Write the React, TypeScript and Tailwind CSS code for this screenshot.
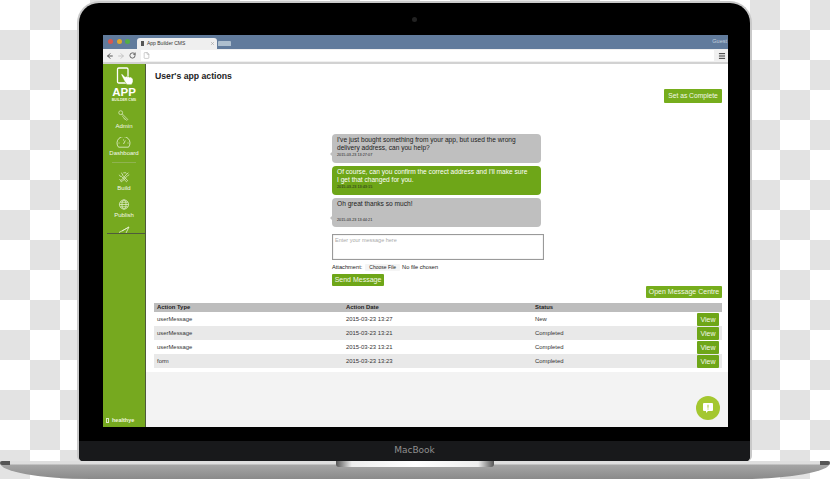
import { Menu, RotateCw, ArrowLeft, ArrowRight, File, X } from "lucide-react";

const font = "font-['Liberation_Sans',Arial,sans-serif]";

const rows = [
  { type: "userMessage", date: "2015-03-23 13:27", status: "New" },
  { type: "userMessage", date: "2015-03-23 13:21", status: "Completed" },
  { type: "userMessage", date: "2015-03-23 13:21", status: "Completed" },
  { type: "form", date: "2015-03-23 13:23", status: "Completed" },
];

function LogoIcon() {
  return (
    <svg width="20" height="20" viewBox="0 0 20 20" fill="none">
      <rect x="1.500" y="1" width="10.500" height="15" rx="1.200" stroke="#fff" strokeWidth="1.300" />
      <path d="M5 7.500l1-.8 3.200 3.200 1.300-.6 1 .5 1-.2 1 .6 1.300-.1 2.200 2v3l-1.500 2.600h-4.500l-2.500-3.500z" fill="#fff" stroke="#76a91f" strokeWidth="0.500" />
    </svg>
  );
}

function KeyIcon() {
  return (
    <svg width="15" height="15" viewBox="0 0 13 13" fill="none" stroke="#e8f2d5" strokeWidth="0.800">
      <circle cx="3.200" cy="3.200" r="2.300" />
      <path d="M5 4.600l6.500 6.500-1.200 1.200L9 11l-.8.200-.2-1-1-.2-.2-1.200-2.300-2.300" />
    </svg>
  );
}

function GaugeIcon() {
  return (
    <svg width="15" height="11" viewBox="0 0 15 11" fill="none" stroke="#e8f2d5" strokeWidth="0.800">
      <path d="M2.500 10.200h10a6.500 6.500 0 1 0-10 0z" />
      <path d="M7.500 7l1.800-3.500M2.500 6h1M11.500 6h1M7.500 2.500v1" />
    </svg>
  );
}

function BuildIcon() {
  return (
    <svg width="15" height="14" viewBox="0 0 15 14" fill="none" stroke="#e8f2d5" strokeWidth="0.900">
      <path d="M3 1l2 1.500v1.500l6.500 7-1.500 1.500L3.500 5.500H2L.8 3.500" />
      <path d="M12.500 1l-2 1.500L4 10l-1.500 1 1 1.500 1.500-1L11.500 4.500l2-1" />
      <path d="M6 1h3.500l1 1M1 9l2 2" />
    </svg>
  );
}

function GlobeIcon() {
  return (
    <svg width="12" height="12" viewBox="0 0 12 12" fill="none" stroke="#e8f2d5" strokeWidth="0.800">
      <circle cx="6" cy="6" r="5" />
      <ellipse cx="6" cy="6" rx="2.200" ry="5" />
      <path d="M1 6h10M1.800 3.500h8.400M1.800 8.500h8.400" />
    </svg>
  );
}

function NavItem({ icon, label }: { icon: React.ReactNode; label: string }) {
  return (
    <div className="flex h-[20px] flex-col items-center justify-end gap-[1px]">
      {icon}
      <span className="text-[6px] leading-[8px] text-[#f4f8e8]">{label}</span>
    </div>
  );
}

function Sidebar() {
  return (
    <aside className="relative flex w-[43px] shrink-0 flex-col items-center border-r border-[#4d5a3a] bg-[#76a91f]">
      <div className="mt-[3px] ml-[3px] flex h-[20px] items-center">
        <LogoIcon />
      </div>
      <span className="text-[11.500px] leading-[10px] font-bold text-white">APP</span>
      <span className="mt-[1px] text-[3.500px] leading-[4px] font-bold text-[#eef5df]">BUILDER CMS</span>
      <div className="mt-[8px] flex flex-col gap-[7px]">
        <NavItem icon={<KeyIcon />} label="Admin" />
        <NavItem icon={<GaugeIcon />} label="Dashboard" />
      </div>
      <div className="mt-[5px] h-px w-[24px] bg-[#8fb350]" />
      <div className="mt-[9px] flex flex-col gap-[7px]">
        <NavItem icon={<BuildIcon />} label="Build" />
        <NavItem icon={<GlobeIcon />} label="Publish" />
      </div>
      <svg className="mt-[7px]" width="12" height="7" viewBox="0 0 12 7" fill="none" stroke="#e8f2d5" strokeWidth="0.800">
        <path d="M1 6.500L11 1 8 7M11 1L4 5" />
      </svg>
      <div className="ml-[4px] h-px w-[39px] self-start bg-[#4f5b3c]" />
      <div className="mt-auto mb-[3px] flex w-full items-center gap-[3px] pl-[3px]">
        <span className="h-[5px] w-[3px] border border-[#dfeac6]" />
        <span className="text-[5.500px] leading-[8px] font-bold text-[#eef5df]">healthye</span>
      </div>
    </aside>
  );
}

function Bubble({ green, lines, time, gap }: { green?: boolean; lines: string[]; time: string; gap?: boolean }) {
  return (
    <div className={`relative flex h-[29px] w-[209px] flex-col rounded-[4px] px-[5px] pt-[2px] text-[6.600px] leading-[8px] ${green ? "bg-[#6ea618] text-white" : "bg-[#bfbfbf] text-[#222]"}`}>
      {!green && (
        <span className="absolute top-[18px] -left-[2px] h-0 w-0 border-y-[2px] border-r-[2px] border-y-transparent border-r-[#bfbfbf]" />
      )}
      {lines.map((l) => (
        <span key={l}>{l}</span>
      ))}
      <span className={`${gap ? "mt-auto mb-[4px]" : "mt-[1px]"} text-[3.800px] leading-[5px] text-[#222]`}>{time}</span>
    </div>
  );
}

function Thread() {
  return (
    <div className="mt-[31px] ml-[178px] flex w-[212px] flex-col">
      <div className="flex flex-col gap-[3px]">
        <Bubble
          lines={["I've just bought something from your app, but used the wrong", "delivery address, can you help?"]}
          time="2015-03-23 13:27:07"
        />
        <Bubble
          green
          lines={["Of course, can you confirm the correct address and I'll make sure", "I get that changed for you."]}
          time="2015-03-23 13:43:15"
        />
        <Bubble lines={["Oh great thanks so much!"]} time="2015-03-23 13:44:21" gap />
      </div>
      <div className="mt-[7px] h-[26px] w-[212px] border border-[#9a9a9a] bg-white px-[2px] py-[2px] text-[5.500px] leading-[7px] text-[#aaa] shadow-[inset_0_0_1px_#999]">
        Enter your message here
      </div>
      <div className="mt-[2px] flex h-[10px] items-center text-[5.700px] text-[#222]">
        <span>Attachment:</span>
        <span className="mr-[2px] ml-[3px] rounded-[1px] bg-[#f5f5f5] px-[4px] text-[5px] leading-[7px]">Choose File</span>
        <span>No file chosen</span>
      </div>
      <button className="mt-[2px] h-[12px] w-[52px] rounded-[1px] bg-[#6ea618] text-[7px] leading-[12px] text-[#f4f8e8]">Send Message</button>
    </div>
  );
}

function ActionsTable() {
  return (
    <div className="w-[568px] text-[5.900px] text-[#333]">
      <div className="grid h-[9px] grid-cols-[189px_189px_1fr] items-center bg-[#bdbdbd] pl-[3px] font-bold text-[#222]">
        <span>Action Type</span>
        <span>Action Date</span>
        <span>Status</span>
      </div>
      {rows.map((r, i) => (
        <div key={i} className={`grid h-[14px] grid-cols-[189px_189px_1fr_auto] items-center pr-[3px] pl-[3px] ${i % 2 ? "bg-[#e9e9e9]" : "bg-white"}`}>
          <span>{r.type}</span>
          <span>{r.date}</span>
          <span>{r.status}</span>
          <button className="h-[13px] w-[22px] rounded-[1px] bg-[#6ea618] text-[7px] leading-[13px] text-[#f4f8e8]">View</button>
        </div>
      ))}
    </div>
  );
}

function Browser() {
  return (
    <div className="mx-[24px] flex h-[392px] w-[625px] flex-col overflow-hidden bg-white">
      <div className="flex h-[14px] shrink-0 items-end bg-[#617b9c]">
        <div className="mb-[5.500px] ml-[5px] flex items-center gap-[3.500px]">
          <span className="h-[5px] w-[5px] rounded-full bg-[#d9594f]" />
          <span className="h-[5px] w-[5px] rounded-full bg-[#e0a92d]" />
          <span className="h-[5px] w-[5px] rounded-full bg-[#54ad45]" />
        </div>
        <div className="ml-[7px] flex h-[11px] w-[80px] items-center rounded-t-[3px] bg-[#efefef] pr-[2px] pl-[4px] text-[5px] text-[#333]">
          <span className="mr-[3px] h-[5px] w-[3px] bg-[#555]" />
          <span className="flex-1">App Builder CMS</span>
          <X size={5} strokeWidth={2} color="#888" />
        </div>
        <div className="mb-[3px] ml-[1px] h-[5px] w-[13px] rounded-t-[1px] bg-[#aebfce]" />
        <span className="mt-[3px] mr-[1px] ml-auto self-start text-[5.500px] leading-[7px] text-[#c4d0de]">Guest</span>
      </div>
      <div className="flex h-[15px] shrink-0 items-center border-b-2 border-[#d2d2d2] bg-[#f0f0f0]">
        <div className="flex w-[38px] items-center gap-[3px] pl-[3px]">
          <ArrowLeft size={8} strokeWidth={3} color="#555" />
          <ArrowRight size={8} strokeWidth={3} color="#c4c4c4" />
          <RotateCw size={7} strokeWidth={3} color="#555" className="ml-[1px]" />
        </div>
        <div className="flex h-[11px] w-[573px] items-center bg-white pl-[2px]">
          <File size={7} color="#aaa" />
        </div>
        <Menu size={8} strokeWidth={3} color="#333" className="ml-[4px]" />
      </div>
      <div className="flex min-h-0 flex-1">
        <Sidebar />
        <main className="relative flex flex-1 flex-col bg-[#f3f3f3]">
          <div className="flex h-[308px] flex-col bg-white pt-[6px] pl-[8px]">
            <h1 className="ml-[1px] text-[8.700px] leading-[12px] font-bold text-[#222]">User's app actions</h1>
            <button className="mt-[7px] mr-[6px] h-[14px] w-[58px] self-end rounded-[1px] bg-[#76ad1c] text-[6.700px] leading-[14px] text-[#f4f8e8]">Set as Complete</button>
            <Thread />
            <button className="mr-[6px] h-[12px] w-[76px] self-end rounded-[1px] bg-[#76ad1c] text-[7px] leading-[12px] text-[#f4f8e8]">Open Message Centre</button>
            <div className="mt-[5px]">
              <ActionsTable />
            </div>
          </div>
          <div className="absolute right-[8px] bottom-[7px] flex h-[24px] w-[24px] items-center justify-center rounded-full bg-[#a4c72f]">
            <svg width="10" height="10" viewBox="0 0 10 10">
              <path d="M1 0h8a1 1 0 0 1 1 1v6a1 1 0 0 1-1 1H5L3 10V8H1a1 1 0 0 1-1-1V1a1 1 0 0 1 1-1z" fill="#fff" />
              <path d="M4.500 1.800h1v3h-1zM4.500 5.400h1v1h-1z" fill="#a4c72f" />
            </svg>
          </div>
        </main>
      </div>
    </div>
  );
}

export default function App() {
  return (
    <div className={`${font} flex h-[479px] w-[830px] flex-col overflow-hidden bg-[conic-gradient(#e3e3e3_25%,#fff_0_50%,#e3e3e3_0_75%,#fff_0)] bg-[length:60px_60px]`}>
      <div className="mt-[1px] ml-[77px] flex w-[675px] flex-col overflow-hidden rounded-t-[22px] rounded-b-[5px] border-x-2 border-t-2 border-[#c9c9c9] bg-black">
        <div className="flex h-[32px] items-center justify-center pt-[1px]">
          <span className="h-[5px] w-[5px] rounded-full bg-[#222]" />
        </div>
        <Browser />
        <div className="mt-[14px] flex h-[20px] items-center justify-center bg-[#18191b] text-[#8f8f8f]">
          <span className="font-['DejaVu_Sans',sans-serif] text-[9px]">MacBook</span>
        </div>
      </div>
      <div className="relative h-[18px] rounded-b-[90px_16px] bg-[linear-gradient(#dedede_0,#dedede_3px,#a5a5a5_4px,#8a8a8a_100%)]">
        <div className="absolute top-0 left-0 h-[4px] w-[10px] rounded-l-full bg-[#555]" />
        <div className="absolute top-0 right-0 h-[4px] w-[10px] rounded-r-full bg-[#555]" />
        <div className="absolute top-0 left-[336px] h-[6px] w-[158px] rounded-b-[3px] bg-[linear-gradient(90deg,#555,#eee_10%,#fff_50%,#eee_90%,#555)]" />
      </div>
    </div>
  );
}
